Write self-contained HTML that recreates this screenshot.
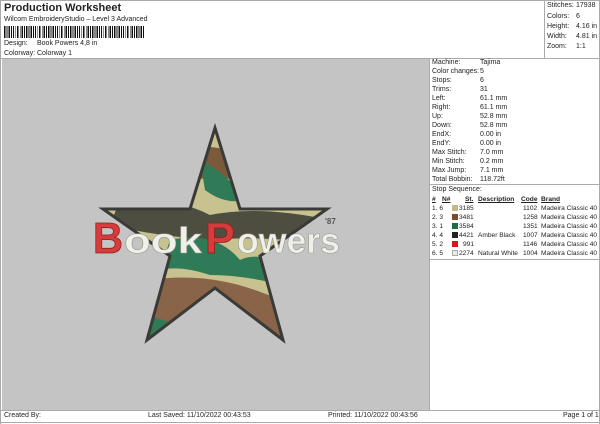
<!DOCTYPE html>
<html><head><style>
*{margin:0;padding:0;box-sizing:border-box}
body{width:600px;height:424px;background:#fff;font-family:"Liberation Sans",sans-serif;position:relative;overflow:hidden;color:#222}
.a{position:absolute;white-space:nowrap;font-size:7px;line-height:10px}
.ln{position:absolute;background:#aaa}
.row{position:absolute;left:432px;font-size:7px;line-height:9px;white-space:nowrap}
.row span{position:absolute;left:48px}
.st{position:absolute;left:432px;font-size:6.6px;white-space:nowrap;width:166px;height:9px;line-height:9px}
.st b{font-weight:normal;position:absolute}
.hd b{font-weight:bold;text-decoration:underline}
.sw{position:absolute;left:20px;top:1px;width:6px;height:6px}
</style></head><body>
<div class="a" style="left:4px;top:1px;font-size:11px;font-weight:bold;line-height:14px">Production Worksheet</div>
<div class="a" style="left:4px;top:15px">Wilcom EmbroideryStudio – Level 3 Advanced</div>
<div class="a" style="left:4px;top:26px;height:12px;width:140px;background:repeating-linear-gradient(90deg,#111 0 1.4px,#fff 1.4px 2.6px,#111 2.6px 3.4px,#fff 3.4px 4.4px)"></div>
<div class="a" style="left:4px;top:39px">Design:</div><div class="a" style="left:37px;top:39px">Book Powers 4,8 in</div>
<div class="a" style="left:4px;top:49px">Colorway:</div><div class="a" style="left:37px;top:49px">Colorway 1</div>
<div class="ln" style="left:0;top:0;width:600px;height:1px"></div>
<div class="ln" style="left:0;top:58px;width:600px;height:1px"></div>
<div class="ln" style="left:0;top:0;width:1px;height:424px"></div>
<div class="ln" style="left:599px;top:0;width:1px;height:424px"></div>
<div class="ln" style="left:544px;top:0;width:1px;height:58px"></div>
<div class="a" style="left:547px;top:1px">Stitches:</div><div class="a" style="left:576px;top:1px">17938</div>
<div class="a" style="left:547px;top:12px">Colors:</div><div class="a" style="left:576px;top:12px">6</div>
<div class="a" style="left:547px;top:22px">Height:</div><div class="a" style="left:576px;top:22px">4.16 in</div>
<div class="a" style="left:547px;top:32px">Width:</div><div class="a" style="left:576px;top:32px">4.81 in</div>
<div class="a" style="left:547px;top:42px">Zoom:</div><div class="a" style="left:576px;top:42px">1:1</div>
<div style="position:absolute;left:2px;top:59px;width:427px;height:351px;background:#c4c4c4"></div>
<div class="ln" style="left:429px;top:58px;width:1px;height:352px"></div>
<svg style="position:absolute;left:0;top:0" width="600" height="424">
<defs><clipPath id="c"><polygon points="215,128 240,209 327,209 260,256 283,340 215,288 147,340 170,256 103,209 190,209"/></clipPath></defs>
<g clip-path="url(#c)">
<rect x="100" y="120" width="240" height="230" fill="#c8c290"/>
<path d="M180 150 Q215 140 250 160 L250 185 Q215 170 180 185Z" fill="#7a5a3a"/>
<path d="M120 200 Q170 195 210 215 Q260 205 330 220 L330 245 Q260 235 210 240 Q150 235 110 225Z" fill="#4e4e40"/>
<path d="M170 240 Q215 230 240 260 Q260 250 300 270 L300 290 Q250 275 210 275 Q180 265 160 270Z" fill="#2f7a57"/>
<path d="M150 280 Q215 270 280 300 L290 345 L140 345Z" fill="#8a6448"/>
<path d="M140 315 Q175 320 190 335 L140 345Z" fill="#2f7a57"/>
<path d="M200 160 Q230 175 245 200 Q225 205 205 190Z" fill="#2f7a57"/>
</g>
<polygon points="215,128 240,209 327,209 260,256 283,340 215,288 147,340 170,256 103,209 190,209" fill="none" stroke="#3a3a36" stroke-width="3" stroke-linejoin="miter"/>
<text x="93" y="253" font-family="Liberation Sans,sans-serif" font-size="44" font-weight="bold" fill="#d93a3a" stroke="#8a2222" stroke-width="0.8" textLength="30" lengthAdjust="spacingAndGlyphs">B</text>
<text x="124" y="253" font-family="Liberation Sans,sans-serif" font-size="36" font-weight="bold" fill="#f0f0ea" stroke="#9a9a90" stroke-width="0.6" textLength="78" lengthAdjust="spacingAndGlyphs">ook</text>
<text x="205" y="253" font-family="Liberation Sans,sans-serif" font-size="44" font-weight="bold" fill="#d93a3a" stroke="#8a2222" stroke-width="0.8" textLength="30" lengthAdjust="spacingAndGlyphs">P</text>
<text x="237" y="253" font-family="Liberation Sans,sans-serif" font-size="36" font-weight="bold" fill="#f0f0ea" stroke="#9a9a90" stroke-width="0.6" textLength="103" lengthAdjust="spacingAndGlyphs">owers</text>
<text x="325" y="224" font-family="Liberation Sans,sans-serif" font-size="8" font-weight="bold" fill="#555">'87</text>
</svg>
<div class="row" style="top:58px">Machine:<span>Tajima</span></div>
<div class="row" style="top:67px">Color changes:<span>5</span></div>
<div class="row" style="top:76px">Stops:<span>6</span></div>
<div class="row" style="top:85px">Trims:<span>31</span></div>
<div class="row" style="top:94px">Left:<span>61.1 mm</span></div>
<div class="row" style="top:103px">Right:<span>61.1 mm</span></div>
<div class="row" style="top:112px">Up:<span>52.8 mm</span></div>
<div class="row" style="top:121px">Down:<span>52.8 mm</span></div>
<div class="row" style="top:130px">EndX:<span>0.00 in</span></div>
<div class="row" style="top:139px">EndY:<span>0.00 in</span></div>
<div class="row" style="top:148px">Max Stitch:<span>7.0 mm</span></div>
<div class="row" style="top:157px">Min Stitch:<span>0.2 mm</span></div>
<div class="row" style="top:166px">Max Jump:<span>7.1 mm</span></div>
<div class="row" style="top:175px">Total Bobbin:<span>118.72ft</span></div>
<div class="ln" style="left:430px;top:184px;width:170px;height:1px"></div>
<div class="row" style="top:185px">Stop Sequence:</div>
<div class="st hd" style="top:195px"><b style="left:0">#</b><b style="left:10px">N#</b><b style="left:33px">St.</b><b style="left:46px">Description</b><b style="left:89px">Code</b><b style="left:109px">Brand</b></div>
<div class="st" style="top:204px"><b style="left:0">1. 6</b><i class="sw" style="background:#c2b88a"></i><b style="left:27px">3185</b><b style="left:91px">1102</b><b style="left:109px">Madeira Classic 40</b></div>
<div class="st" style="top:213px"><b style="left:0">2. 3</b><i class="sw" style="background:#7a4a30"></i><b style="left:27px">3481</b><b style="left:91px">1258</b><b style="left:109px">Madeira Classic 40</b></div>
<div class="st" style="top:222px"><b style="left:0">3. 1</b><i class="sw" style="background:#1f6a48"></i><b style="left:27px">3584</b><b style="left:91px">1351</b><b style="left:109px">Madeira Classic 40</b></div>
<div class="st" style="top:231px"><b style="left:0">4. 4</b><i class="sw" style="background:#222"></i><b style="left:27px">4421</b><b style="left:46px">Amber Black</b><b style="left:91px">1007</b><b style="left:109px">Madeira Classic 40</b></div>
<div class="st" style="top:240px"><b style="left:0">5. 2</b><i class="sw" style="background:#d81818"></i><b style="left:31px">991</b><b style="left:91px">1146</b><b style="left:109px">Madeira Classic 40</b></div>
<div class="st" style="top:249px"><b style="left:0">6. 5</b><i class="sw" style="background:#e8e8ee;border:1px solid #aaa"></i><b style="left:27px">2274</b><b style="left:46px">Natural White</b><b style="left:91px">1004</b><b style="left:109px">Madeira Classic 40</b></div>
<div class="ln" style="left:430px;top:259px;width:170px;height:1px"></div>
<div class="ln" style="left:0;top:410px;width:600px;height:1px"></div>
<div class="ln" style="left:0;top:422px;width:600px;height:1px"></div>
<div class="a" style="left:4px;top:411px">Created By:</div>
<div class="a" style="left:148px;top:411px">Last Saved: 11/10/2022 00:43:53</div>
<div class="a" style="left:328px;top:411px">Printed: 11/10/2022 00:43:56</div>
<div class="a" style="left:563px;top:411px">Page 1 of 1</div>
</body></html>
